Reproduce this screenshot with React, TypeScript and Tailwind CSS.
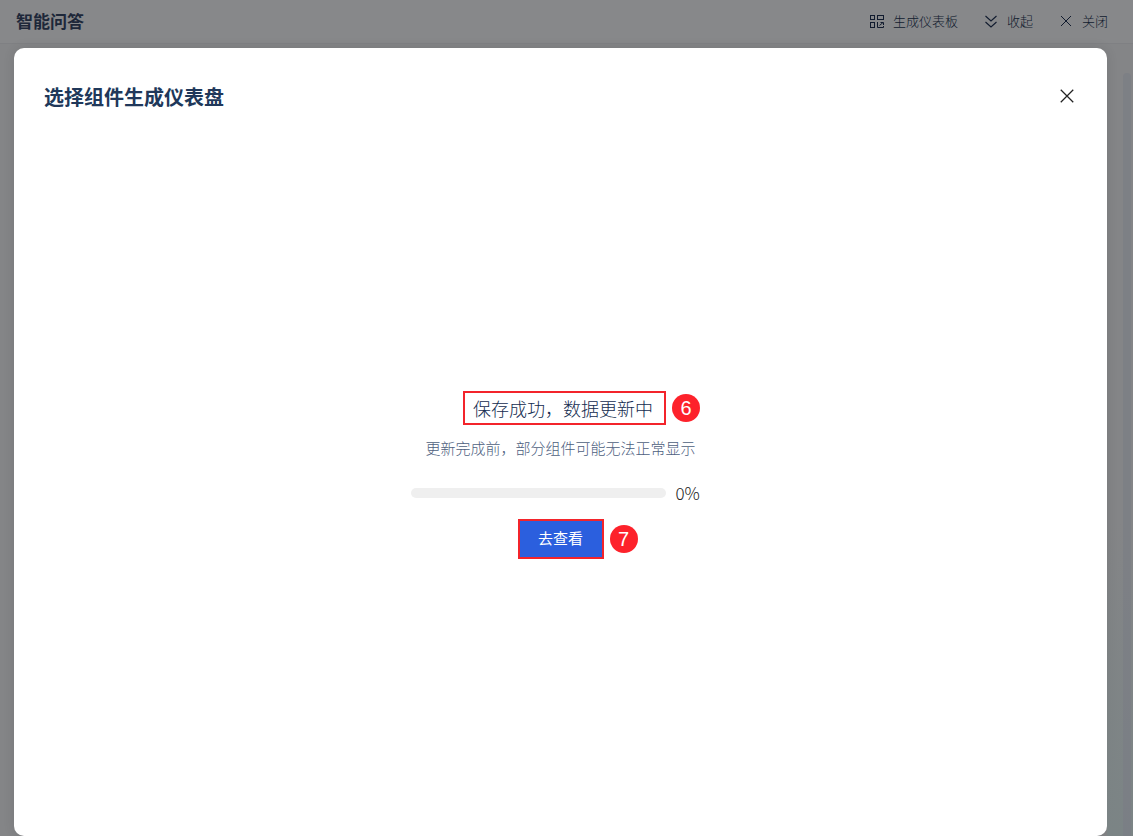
import { ReactNode, useState } from "react";

type ToolbarButtonProps = {
  icon: ReactNode;
  label: string;
};

function ToolbarButton({ icon, label }: ToolbarButtonProps) {
  return (
    <button type="button" className="flex cursor-pointer items-center gap-2 text-[13px] leading-5">
      {icon}
      <span>{label}</span>
    </button>
  );
}

function DashboardIcon() {
  return (
    <svg className="size-4" viewBox="0 0 16 16" fill="none" stroke="currentColor" aria-hidden="true">
      <rect x="1.5" y="2.5" width="4" height="4" />
      <rect x="8.5" y="2.5" width="6" height="4" />
      <rect x="1.5" y="9.5" width="4" height="5" />
      <path d="M8.5 9v5.5h6V13M10.5 12.5l3.5-3M11.5 9.5h3v2.5" />
    </svg>
  );
}

function CollapseIcon() {
  return (
    <svg className="size-4" viewBox="0 0 16 16" fill="none" stroke="currentColor" strokeWidth="1.1" aria-hidden="true">
      <path d="M2.5 3l5.5 5 5.5-5M2.5 9l5.5 5 5.5-5" />
    </svg>
  );
}

function CrossIcon({ className }: { className: string }) {
  return (
    <svg className={className} viewBox="0 0 16 16" fill="none" stroke="currentColor" aria-hidden="true">
      <path d="M3 3l10 10M13 3L3 13" />
    </svg>
  );
}

function StepBadge({ step }: { step: number }) {
  return (
    <span className="absolute top-1/2 left-full ml-1.5 flex size-7 -translate-y-1/2 items-center justify-center rounded-full bg-[#fd222b] font-['Liberation_Sans'] text-xl leading-7 font-normal text-white">
      {step}
    </span>
  );
}

export default function App() {
  const [progress] = useState(0);

  return (
    <div className="flex min-h-screen flex-col bg-[#848587] font-['Noto_Sans_CJK_SC',sans-serif]">
      <header className="flex h-11 items-center justify-between border-b border-[#7f8083] bg-[#87888a] pr-[25px] pb-0.5 pl-4 text-[#1d2739]">
        <h1 className="text-[17px] leading-6 font-bold">智能问答</h1>
        <nav className="flex items-center gap-[25px] font-light text-[#111b2e]">
          <ToolbarButton icon={<DashboardIcon />} label="生成仪表板" />
          <ToolbarButton icon={<CollapseIcon />} label="收起" />
          <ToolbarButton icon={<CrossIcon className="size-4" />} label="关闭" />
        </nav>
      </header>

      <div className="flex flex-1 pt-1 pl-3.5">
        <section
          role="dialog"
          aria-labelledby="dialog-title"
          className="flex flex-1 flex-col rounded-[10px] bg-white shadow-[0_0_12px_rgba(0,0,0,0.1)]"
        >
          <div className="flex items-center justify-between px-[30px] pt-8">
            <h2 id="dialog-title" className="text-xl leading-[34px] font-bold text-[#20385a]">
              选择组件生成仪表盘
            </h2>
            <button type="button" aria-label="关闭对话框" className="cursor-pointer pb-0.5 text-[#222]">
              <CrossIcon className="size-5" />
            </button>
          </div>

          <div className="flex flex-1 flex-col items-center justify-center font-light">
            <div className="relative ml-2">
              <h3 className="h-[34px] w-[203px] border-2 border-[#f3242b] pl-2 text-lg leading-[30px] whitespace-nowrap text-[#142c4f]">
                保存成功，数据更新中
              </h3>
              <StepBadge step={6} />
            </div>
            <p className="mt-3 text-[15px] leading-[22px] text-[#4d6080]">
              更新完成前，部分组件可能无法正常显示
            </p>
            <div className="mt-[22px] flex w-[300px] items-center gap-2.5">
              <progress
                value={progress}
                max={100}
                aria-label="更新进度"
                className="h-2.5 w-[255px] appearance-none overflow-hidden rounded-full bg-[#efefef] [&::-webkit-progress-bar]:bg-[#efefef] [&::-webkit-progress-value]:bg-[#2b5fde]"
              />
              <span className="text-[17px] leading-6 text-[#222]">{progress}%</span>
            </div>
            <div className="relative mt-3.5">
              <button
                type="button"
                className="block h-10 w-[86px] cursor-pointer border-2 border-[#f3242b] bg-[#2b5fde] pb-0.5 text-[15px] leading-5 font-normal text-white"
              >
                去查看
              </button>
              <StepBadge step={7} />
            </div>
          </div>
        </section>

        <div className="flex w-[26px] justify-end bg-linear-to-b from-transparent from-60% to-[#7b8485] pt-[25px] pr-0.5">
          <div className="w-2 rounded-t-full bg-[#7b7d85]/70" />
        </div>
      </div>
    </div>
  );
}
